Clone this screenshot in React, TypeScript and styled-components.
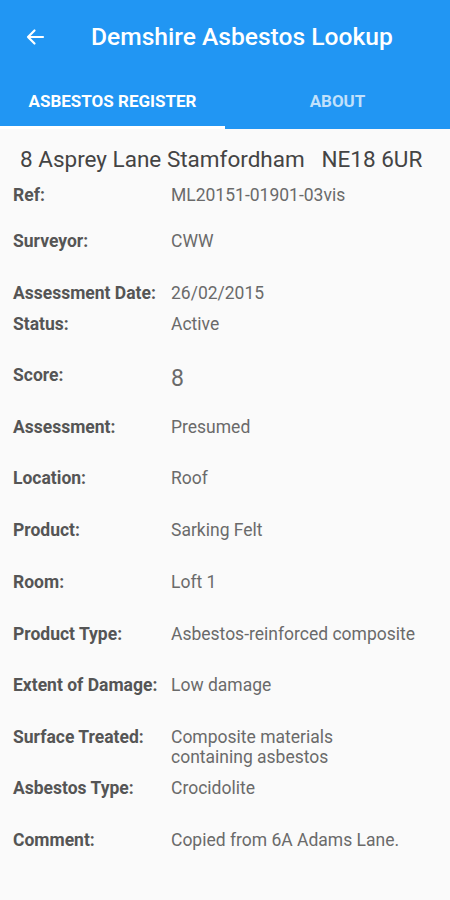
import React from "react";
import styled, { createGlobalStyle } from "styled-components";

const Global = createGlobalStyle`
  html, body { margin: 0; padding: 0; background: #fafafa; }
  body { font-family: Roboto, "Noto Sans", sans-serif; }
`;

const Page = styled.div`
  width: 450px;
  height: 900px;
  background: #fafafa;
  overflow: hidden;
`;

const Header = styled.header`
  background: #2196f3;
  color: #fff;
`;

const Toolbar = styled.div`
  height: 74px;
  display: flex;
  align-items: center;
  padding-left: 22px;
`;

const BackButton = styled.div`
  width: 26px;
  height: 26px;
  display: flex;
  align-items: center;
  justify-content: center;
`;

const Title = styled.h1`
  margin: 0 0 0 43px;
  font-size: 24.6px;
  font-weight: 500;
  padding-bottom: 2px;
`;

const Tabs = styled.div`
  display: flex;
  height: 55px;
`;

const Tab = styled.div<{ $active?: boolean }>`
  flex: 1;
  display: flex;
  align-items: center;
  justify-content: center;
  font-size: 17px;
  font-weight: 700;
  color: ${(p) => (p.$active ? "#ffffff" : "rgba(255,255,255,0.72)")};
  border-bottom: 3px solid ${(p) => (p.$active ? "#ffffff" : "transparent")};
  padding-top: 2px;
  box-sizing: border-box;
`;

const Content = styled.main`
  padding: 0 0 0 13px;
`;

const Address = styled.div`
  font-size: 22.5px;
  color: #444;
  padding: 17px 0 0 7px;
  height: 39px;
  line-height: 26px;
  white-space: pre;
`;

const Row = styled.div<{ $h: number }>`
  display: grid;
  grid-template-columns: 158px 1fr;
  height: ${(p) => p.$h}px;
  align-items: start;
`;

const Label = styled.div`
  font-size: 17.5px;
  font-weight: 700;
  color: #555;
  line-height: 20px;
`;

const Value = styled.div<{ $big?: boolean }>`
  font-size: ${(p) => (p.$big ? "23px" : "17.5px")};
  color: #6a6a6a;
  line-height: 20px;
  margin-top: ${(p) => (p.$big ? "4px" : "0")};
`;

const MultiLine = styled.span`
  white-space: pre-line;
`;

const rows: { label: string; value: string; h: number; big?: boolean }[] = [
  { label: "Ref:", value: "ML20151-01901-03vis", h: 46 },
  { label: "Surveyor:", value: "CWW", h: 52 },
  { label: "Assessment Date:", value: "26/02/2015", h: 31 },
  { label: "Status:", value: "Active", h: 51 },
  { label: "Score:", value: "8", h: 52, big: true },
  { label: "Assessment:", value: "Presumed", h: 51 },
  { label: "Location:", value: "Roof", h: 52 },
  { label: "Product:", value: "Sarking Felt", h: 52 },
  { label: "Room:", value: "Loft 1", h: 52 },
  { label: "Product Type:", value: "Asbestos-reinforced composite", h: 51 },
  { label: "Extent of Damage:", value: "Low damage", h: 52 },
  { label: "Surface Treated:", value: "Composite materials\ncontaining asbestos", h: 51 },
  { label: "Asbestos Type:", value: "Crocidolite", h: 52 },
  { label: "Comment:", value: "Copied from 6A Adams Lane.", h: 52 },
];

export default function App() {
  return (
    <Page>
      <Global />
      <Header>
        <Toolbar>
          <BackButton>
            <svg width="24" height="24" viewBox="0 0 24 24" fill="none">
              <path
                d="M20 12H5M11.5 5.5L5 12l6.5 6.5"
                stroke="#fff"
                strokeWidth="2.2"
                strokeLinecap="round"
                strokeLinejoin="round"
              />
            </svg>
          </BackButton>
          <Title>Demshire Asbestos Lookup</Title>
        </Toolbar>
        <Tabs>
          <Tab $active>ASBESTOS REGISTER</Tab>
          <Tab>ABOUT</Tab>
        </Tabs>
      </Header>
      <Content>
        <Address>{"8 Asprey Lane Stamfordham   NE18 6UR"}</Address>
        {rows.map((r) => (
          <Row key={r.label} $h={r.h}>
            <Label>{r.label}</Label>
            <Value $big={r.big}>
              <MultiLine>{r.value}</MultiLine>
            </Value>
          </Row>
        ))}
      </Content>
    </Page>
  );
}
